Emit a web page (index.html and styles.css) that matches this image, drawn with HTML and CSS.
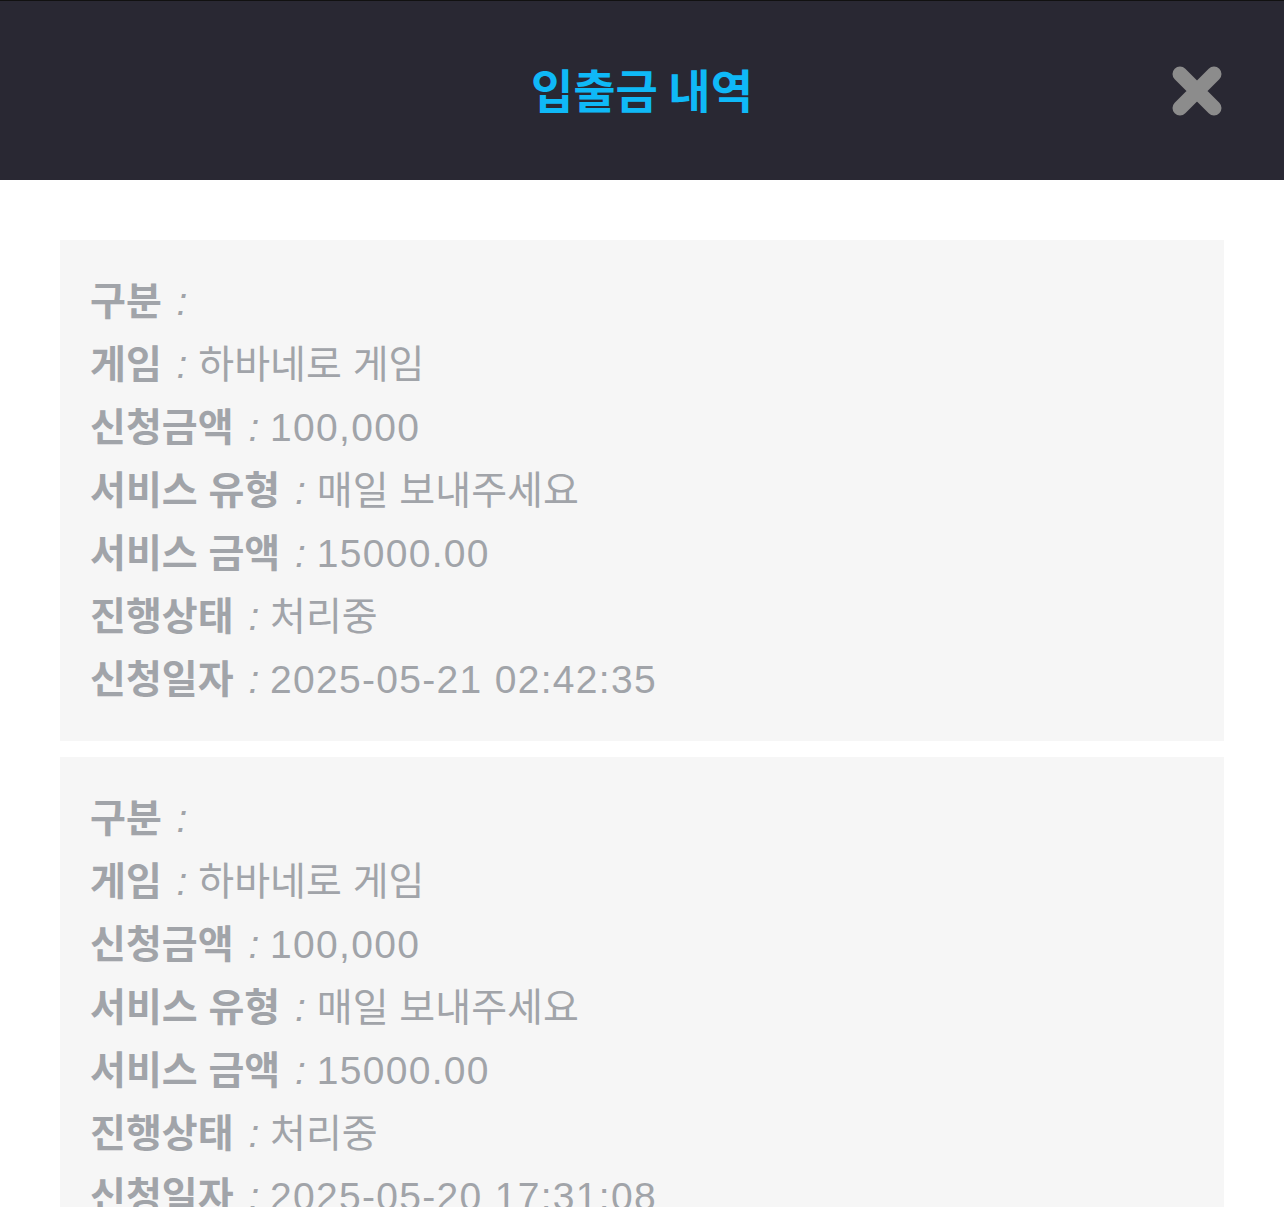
FILE: index.html
```html
<!DOCTYPE html>
<html>

<head>
    <meta charset="utf-8">
    <title>입출금 내역</title>
    <link rel="stylesheet" href="styles.css">
</head>

<body>
    <header class="top-bar">
        <h1 class="title">입출금 내역</h1>
        <button class="close-btn" type="button" aria-label="닫기">
            <svg width="54" height="54" viewBox="0 0 54 54">
                <path d="M10 10 L44 44 M44 10 L10 44" stroke="#8c8c8c" stroke-width="15" stroke-linecap="round" fill="none" />
            </svg>
        </button>
    </header>

    <main class="history">
        <div class="card">
            <p class="row"><b>구분</b> <i>:</i></p>
            <p class="row"><b>게임</b> <i>:</i> 하바네로 게임</p>
            <p class="row"><b>신청금액</b> <i>:</i> <span class="num">100,000</span></p>
            <p class="row"><b>서비스 유형</b> <i>:</i> 매일 보내주세요</p>
            <p class="row"><b>서비스 금액</b> <i>:</i> <span class="num">15000.00</span></p>
            <p class="row"><b>진행상태</b> <i>:</i> 처리중</p>
            <p class="row"><b>신청일자</b> <i>:</i> <span class="num">2025-05-21 02:42:35</span></p>
        </div>
        <div class="card">
            <p class="row"><b>구분</b> <i>:</i></p>
            <p class="row"><b>게임</b> <i>:</i> 하바네로 게임</p>
            <p class="row"><b>신청금액</b> <i>:</i> <span class="num">100,000</span></p>
            <p class="row"><b>서비스 유형</b> <i>:</i> 매일 보내주세요</p>
            <p class="row"><b>서비스 금액</b> <i>:</i> <span class="num">15000.00</span></p>
            <p class="row"><b>진행상태</b> <i>:</i> 처리중</p>
            <p class="row"><b>신청일자</b> <i>:</i> <span class="num">2025-05-20 17:31:08</span></p>
        </div>
    </main>
</body>

</html>
```

FILE: styles.css
```css
/* 기본 */
html,
body {
    margin: 0;
    padding: 0;
    background: #fff;
    font-family: "Liberation Sans", "Noto Sans CJK KR", sans-serif;
}

/* 상단 바 */
.top-bar {
    position: relative;
    height: 179px;
    border-top: 1px solid #111;
    background: #292833;
    display: flex;
    justify-content: center;
    align-items: center;
}

.title {
    margin: 0 0 6px;
    color: #0fb9f7;
    font-family: "Noto Sans CJK KR", sans-serif;
    font-size: 46px;
    font-weight: 700;
}

.close-btn {
    position: absolute;
    right: 60px;
    top: 63px;
    padding: 0;
    border: none;
    background: none;
    cursor: pointer;
    line-height: 0;
}

/* 내역 목록 */
.history {
    padding: 60px 60px 0;
    display: flex;
    flex-direction: column;
    gap: 16px;
}

.card {
    background: #f6f6f6;
    padding: 30px 30px;
}

.row {
    margin: 0;
    font-size: 39px;
    line-height: 63px;
    color: #a1a4a9;
    white-space: nowrap;
}

.row b {
    font-weight: 700;
}

.row i {
    margin-left: 4px;
    font-weight: 400;
}

/* 숫자 간격 */
.num {
    letter-spacing: 1.3px;
}
```
